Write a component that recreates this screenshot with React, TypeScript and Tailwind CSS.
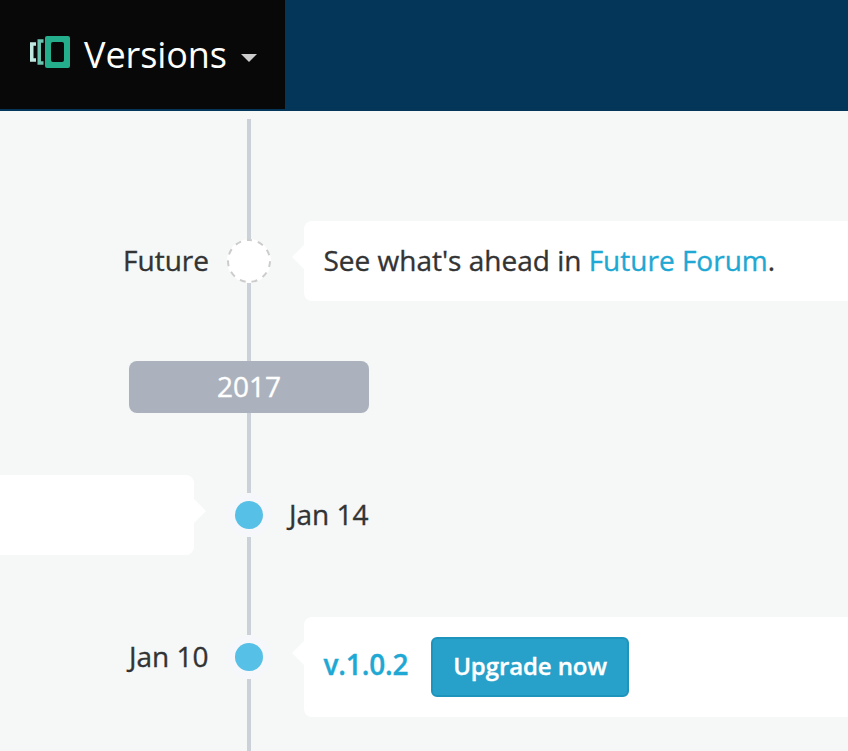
import type { ReactNode } from 'react';

function Line({ className }: { className: string }) {
  return <div className={`w-1 bg-[#cbd0d9] ${className}`} />;
}

function Dot() {
  return (
    <div className="flex size-11 shrink-0 items-center justify-center rounded-full bg-[#f5f7fa]">
      <div className="size-7 rounded-full bg-[#56c0e6]" />
    </div>
  );
}

function FutureDot() {
  return (
    <svg className="size-11 shrink-0" viewBox="0 0 44 44">
      <circle cx="22" cy="22" r="22" fill="#fff" />
      <circle cx="22" cy="22" r="21" fill="none" stroke="#ccc" strokeWidth="2" strokeDasharray="6 5.994" strokeDashoffset="3" transform="rotate(-90 22 22)" />
    </svg>
  );
}

function Pointer({ flip = false }: { flip?: boolean }) {
  return (
    <svg className={`mt-6 h-6 w-3 shrink-0 ${flip ? 'rotate-180' : ''}`} viewBox="0 0 12 24">
      <path d="M12 0 0 12l12 12z" fill="#fff" />
    </svg>
  );
}

function Row({ className, left, center, right }: { className: string; left: ReactNode; center: ReactNode; right: ReactNode }) {
  return (
    <div className={`grid grid-cols-[227px_44px_1fr] ${className}`}>
      <div>{left}</div>
      <div className="flex flex-col items-center">{center}</div>
      <div className="min-w-0">{right}</div>
    </div>
  );
}

export default function App() {
  return (
    <div className="flex h-[751px] w-full flex-col overflow-hidden bg-[#f5f8f7] text-[28px] leading-[44px] text-[#333] [font-family:'Open_Sans',sans-serif]">
      <header className="h-[111px] shrink-0 bg-[#043659]">
        <div className="flex h-[109px] w-[285px] items-center bg-[#080808] pl-[30px] text-white">
          <svg className="-mt-[5px] h-8 w-10 shrink-0" viewBox="0 0 40 32">
            <path d="M6 8H1.750v16H6" fill="none" stroke="#c1e8e0" strokeWidth="3.500" />
            <path d="M13.500 5H9.250v22h4.250" fill="none" stroke="#6bc4af" strokeWidth="3.500" />
            <path fillRule="evenodd" fill="#25ae8c" d="M17 0h21a2 2 0 0 1 2 2v28a2 2 0 0 1-2 2H17a2 2 0 0 1-2-2V2a2 2 0 0 1 2-2zM23 6a2 2 0 0 0-2 2v16a2 2 0 0 0 2 2h9a2 2 0 0 0 2-2V8a2 2 0 0 0-2-2z" />
          </svg>
          <span className="ml-[14px] w-[157px] shrink-0 text-[36px] tracking-[-0.08px]">Versions</span>
          <svg className="mt-[7px] h-2 w-4 shrink-0" viewBox="0 0 16 8">
            <path d="M0 0h16L8 8z" fill="#ccc" />
          </svg>
        </div>
      </header>

      <main className="pt-2 [-webkit-text-stroke-width:0.35px]">
        <Row
          className="h-[242px]"
          left={<p className="mt-[119px] pr-[18px] text-right">Future</p>}
          center={<><Line className="h-[120px]" /><FutureDot /><Line className="flex-1" /></>}
          right={
            <div className="mt-[102px] flex pl-[21px]">
              <Pointer />
              <div className="h-20 flex-1 rounded-l-lg bg-white py-[17px] pl-[19.5px]">
                See what's ahead in <a className="text-[#1fa8d3]">Future Forum</a>.
              </div>
            </div>
          }
        />
        <div className="ml-[129px] h-[52px] w-60 rounded-lg bg-[#abb2bd] text-center leading-[50px] text-white">2017</div>
        <Row
          className="h-[173px]"
          left={
            <div className="mt-[62px] flex">
              <div className="h-20 w-[194px] rounded-r-lg bg-white" />
              <Pointer flip />
            </div>
          }
          center={<><Line className="h-20" /><Dot /><Line className="flex-1" /></>}
          right={<p className="mt-[79px] pl-[18px]">Jan 14</p>}
        />
        <Row
          className="h-[165px]"
          left={<p className="mt-12 pr-[18.5px] text-right">Jan 10</p>}
          center={<><Line className="h-[49px]" /><Dot /><Line className="flex-1" /></>}
          right={
            <div className="mt-[31px] flex pl-[21px]">
              <Pointer />
              <div className="flex h-[100px] flex-1 items-center rounded-l-lg bg-white pl-[19px]">
                <a className="-mt-[6px] w-[108px] pl-[0.5px] font-semibold tracking-[-0.15px] text-[#1fa8d3]">v.1.0.2</a>
                <button className="h-[60px] w-[198px] rounded-md border-2 border-[#1d94bc] bg-[#27a1ca] pb-0.5 text-[24px] font-semibold tracking-[-0.1px] text-white">
                  Upgrade now
                </button>
              </div>
            </div>
          }
        />
      </main>
    </div>
  );
}
